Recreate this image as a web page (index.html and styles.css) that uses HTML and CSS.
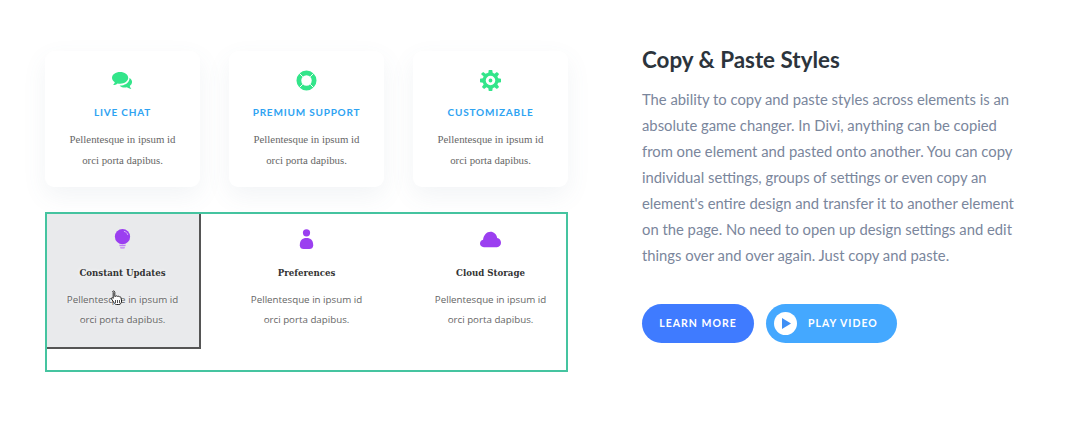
FILE: index.html

```html
<!DOCTYPE html>
<html lang="en">
<head>
    <meta charset="UTF-8">
    <title>Copy &amp; Paste Styles</title>
    <link rel="stylesheet" href="styles.css">
</head>
<body>
<div class="page">

    <div class="demo">
        <div class="cards">
            <div class="card">
                <svg class="icon" viewBox="0 0 22 18"><path class="green" d="M8.500 0C3.800 0 0 2.700 0 6.200c0 1.900 1.100 3.500 2.900 4.600-.2 1.200-.9 2.100-1.900 3 1.900 0 3.600-.6 4.800-1.700.9.2 1.800.3 2.700.3 4.700 0 8.500-2.800 8.500-6.200S13.200 0 8.500 0z"/><path class="green" d="M18.300 6.500c.1 4-3.500 7.300-8.300 7.800-.8.1-1.400.1-2 .1 1.300 1.200 3.300 2 5.500 2 .7 0 1.400-.1 2-.2 1.300.9 3 1.600 4.800 1.800-.9-1-1.500-2-1.700-3.200 1.500-1 2.400-2.500 2.400-4.100 0-1.800-1-3.300-2.700-4.200z"/></svg>
                <h4 class="card-title">LIVE CHAT</h4>
                <p class="card-text">Pellentesque in ipsum id<br>orci porta dapibus.</p>
            </div>
            <div class="card">
                <svg class="icon" viewBox="0 0 22 22"><circle class="ring" cx="11" cy="11" r="8"/><path class="spokes" d="M3.500 3.500l3.600 3.600M18.500 3.500l-3.600 3.600M3.500 18.500l3.600-3.600M18.500 18.500l-3.600-3.600"/></svg>
                <h4 class="card-title">PREMIUM SUPPORT</h4>
                <p class="card-text">Pellentesque in ipsum id<br>orci porta dapibus.</p>
            </div>
            <div class="card">
                <svg class="icon" viewBox="0 0 22 22"><path class="green" fill-rule="evenodd" d="M9.200 0h3.600l.5 3 1.900.8 2.500-1.800 2.300 2.300-1.800 2.500.8 1.900 3 .5v3.600l-3 .5-.8 1.900 1.800 2.500-2.300 2.300-2.500-1.800-1.900.8-.5 3H9.200l-.5-3-1.900-.8-2.500 1.800-2.300-2.300 1.800-2.500-.8-1.900-3-.5V9.200l3-.5.8-1.900L1 4.300 3.300 2l2.500 1.800L8.700 3zM11 6a5 5 0 1 0 0 10 5 5 0 0 0 0-10zm0 3a2 2 0 1 1 0 4 2 2 0 0 1 0-4z"/></svg>
                <h4 class="card-title">CUSTOMIZABLE</h4>
                <p class="card-text">Pellentesque in ipsum id<br>orci porta dapibus.</p>
            </div>
        </div>

        <div class="selection">
            <div class="cell cell-hover">
                <svg class="icon-small" viewBox="0 0 16 22"><circle class="purple" cx="8" cy="8" r="8"/><path class="shine" d="M9.500 2.500c2 .3 3.600 1.700 4 3.700"/><path class="purple-light" d="M4.500 16.500h7l-.6 1.500H5.100zM5.300 19h5.400l-.7 1.500H6z"/></svg>
                <h4 class="cell-title">Constant Updates</h4>
                <p class="cell-text">Pellentesque in ipsum id<br>orci porta dapibus.</p>
                <svg class="cursor" viewBox="0 0 14 16"><path d="M3.500 1c.8 0 1.300.5 1.300 1.300v4.200l.8-.2c.5-.6 1.500-.6 1.900.1.500-.4 1.400-.3 1.800.4.600-.3 1.600 0 1.700 1l.6 3.200c0 1.800-1 3.500-2.800 3.500H6.500c-1 0-1.700-.6-2.300-1.600L1.500 9c-.5-1 .6-1.800 1.400-1l.3.300V2.300C2.200 1.500 2.800 1 3.500 1z"/><path class="cursor-lines" d="M5.500 10v3M7.500 10v3M9.500 10v3"/></svg>
            </div>
            <div class="cell">
                <svg class="icon-small" viewBox="0 0 14 22"><circle class="purple" cx="7" cy="4" r="3.800"/><path class="purple" d="M0 17c0-5 2.500-7.500 7-7.500s7 2.500 7 7.500c0 2.800-1.800 4-4 4H4c-2.200 0-4-1.200-4-4z"/></svg>
                <h4 class="cell-title">Preferences</h4>
                <p class="cell-text">Pellentesque in ipsum id<br>orci porta dapibus.</p>
            </div>
            <div class="cell">
                <svg class="icon-small" viewBox="0 0 22 18"><path class="purple" d="M4 17c-2.400 0-4-1.700-4-3.800 0-2 1.300-3.500 3.200-3.900C3.800 4.500 7 1 11 1c3.500 0 6.200 2.500 7 6.500 2.300.4 4 2.400 4 5 0 2.600-1.800 4.500-4.200 4.500z"/></svg>
                <h4 class="cell-title">Cloud Storage</h4>
                <p class="cell-text">Pellentesque in ipsum id<br>orci porta dapibus.</p>
            </div>
        </div>
    </div>

    <div class="info">
        <h2 class="info-title">Copy &amp; Paste Styles</h2>
        <p class="info-text">The ability to copy and paste styles across elements is an absolute game changer. In Divi, anything can be copied from one element and pasted onto another. You can copy individual settings, groups of settings or even copy an element's entire design and transfer it to another element on the page. No need to open up design settings and edit things over and over again. Just copy and paste.</p>
        <div class="buttons">
            <a class="btn btn-learn">LEARN MORE</a>
            <a class="btn btn-play">
                <span class="play-circle"><svg viewBox="0 0 10 12"><path d="M0 0l10 6-10 6z"/></svg></span>
                PLAY VIDEO
            </a>
        </div>
    </div>

</div>
</body>
</html>
```

FILE: styles.css

```css
body {
    margin: 0;
    background-color: #fff;
}

.page {
    display: flex;
    align-items: flex-start;
    padding: 51px 0 0 45px;
}

.demo {
    width: 523px;
}

.cards {
    display: grid;
    grid-template-columns: repeat(3, 155px);
    column-gap: 29px;
}

.card {
    height: 136px;
    background-color: #fff;
    border-radius: 9px;
    box-shadow: 0 9px 24px rgba(90, 110, 140, 0.08);
    text-align: center;
    padding-top: 19px;
    box-sizing: border-box;
}

.icon {
    display: block;
    width: 21px;
    height: 21px;
    margin: 0 auto;
}

.green {
    fill: #33e58a;
}

.ring {
    fill: none;
    stroke: #33e58a;
    stroke-width: 5;
}

.spokes {
    stroke: #fff;
    stroke-width: 1;
}

.card-title {
    margin: 14px 0 0;
    font: bold 10px/14px "Lato", sans-serif;
    letter-spacing: 0.8px;
    color: #2ea3f2;
}

.card-text {
    margin: 10px 0 0;
    font: 10.800px/20.500px "Liberation Serif", serif;
    color: #666;
}

.selection {
    display: grid;
    grid-template-columns: 154px 155px 155px;
    column-gap: 29px;
    height: 160px;
    margin-top: 25px;
    border: 2px solid #45c4a0;
    box-sizing: border-box;
}

.cell {
    position: relative;
    height: 135px;
    text-align: center;
    padding: 15px 2px 0 0;
    box-sizing: border-box;
}

.cell-hover {
    background-color: #e9eaec;
    border-right: 2px solid #555;
    border-bottom: 2px solid #555;
    padding-right: 1px;
}

.cell-hover .cell-title,
.cell-hover .cell-text {
    text-shadow: 0 0 4px #fff;
}

.icon-small {
    display: block;
    height: 21px;
    width: 21px;
    margin: 0 auto;
}

.purple {
    fill: #9b3ff0;
}

.purple-light {
    fill: #c07df5;
}

.shine {
    fill: none;
    stroke: #d9b8fa;
    stroke-width: 1;
}

.cell-title {
    margin: 16px 0 0;
    font: bold 9.600px/14px "DejaVu Serif", serif;
    font-stretch: condensed;
    color: #333;
}

.cell-text {
    margin: 10px 0 0;
    font: 9.750px/20px "Open Sans", sans-serif;
    color: #666;
}

.cursor {
    position: absolute;
    left: 63px;
    top: 76px;
    width: 14px;
    height: 16px;
}

.cursor path {
    fill: #fff;
    stroke: #222;
    stroke-width: 1;
}

.cursor .cursor-lines {
    stroke-width: 0.800;
}

.info {
    width: 380px;
    margin-left: 74px;
}

.info-title {
    margin: -5px 0 0;
    font: bold 22.400px/28px "Lato", sans-serif;
    color: #2c343c;
}

.info-text {
    margin: 12px 0 0;
    font: 14.800px/26px "Lato", sans-serif;
    color: #7a869c;
}

.buttons {
    display: flex;
    gap: 12px;
    margin-top: 36px;
}

.btn {
    display: flex;
    align-items: center;
    height: 39px;
    border-radius: 20px;
    color: #fff;
    font: bold 10.500px/39px "Lato", sans-serif;
    letter-spacing: 1px;
    box-sizing: border-box;
}

.btn-learn {
    width: 112px;
    justify-content: center;
    background-color: #3f7bff;
}

.btn-play {
    width: 131px;
    padding-left: 8px;
    gap: 11px;
    background-color: #44a8ff;
}

.play-circle {
    display: flex;
    align-items: center;
    justify-content: center;
    width: 23px;
    height: 23px;
    border-radius: 50%;
    background-color: #fff;
}

.play-circle svg {
    width: 9px;
    height: 11px;
    margin-left: 2px;
    fill: #3f8ff5;
}
```
